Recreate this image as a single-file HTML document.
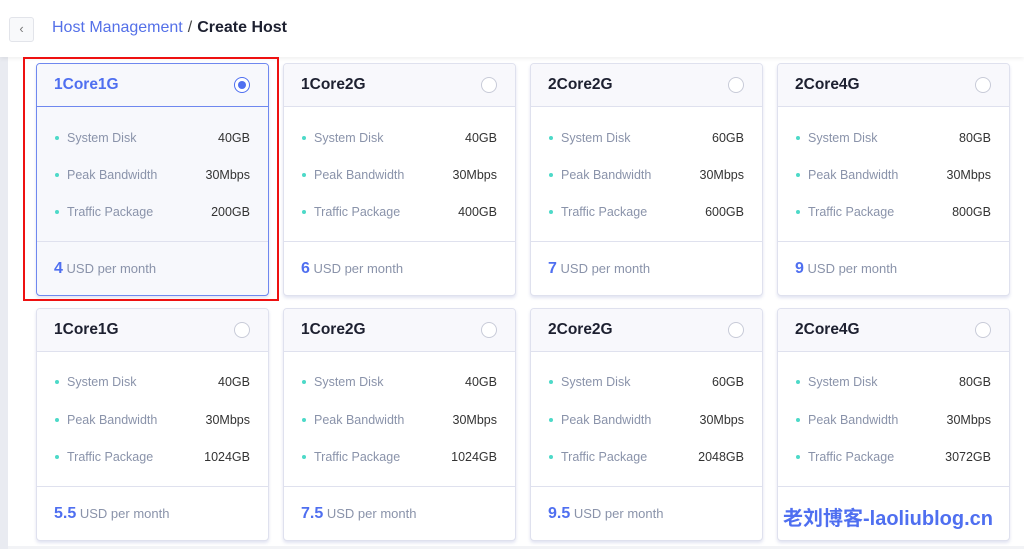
<!DOCTYPE html>
<html><head><meta charset="utf-8"><style>
*{box-sizing:border-box;margin:0;padding:0}
body{width:1024px;height:549px;overflow:hidden;background:#fff;font-family:"Liberation Sans",sans-serif;position:relative}
.top{position:absolute;left:0;top:0;width:1024px;height:57px;background:#fff;box-shadow:0 2px 4px rgba(0,0,0,.06);z-index:2}
.back{position:absolute;left:9px;top:17px;width:25px;height:25px;border:1px solid #e2e4ea;border-radius:3px;background:#f8f9fb;color:#777;font-size:13px;text-align:center;line-height:22px}
.bc{position:absolute;left:52px;top:19px;font-size:16px;color:#5470e8}
.bc b{color:#1d2030}
.bc span{color:#444;margin:0 5px}
.strip{position:absolute;left:0;top:57px;width:8px;height:492px;background:#e9ebf1}
.bot{position:absolute;left:8px;top:546px;width:1016px;height:3px;background:#f2f3f6}
.card{position:absolute;width:233px;height:233px;border:1px solid #dfe1ee;border-radius:4px;background:#fff;box-shadow:0 2px 3px rgba(90,100,180,.18);overflow:hidden}
.hd{height:43px;background:#f8f8fc;border-bottom:1px solid #dfe1ee;position:relative}
.hd .t{position:absolute;left:17px;top:12px;font-size:15.5px;font-weight:bold;color:#1d2030}
.rd{position:absolute;right:18px;top:13px;width:16px;height:16px;border:1px solid #c8cbd8;border-radius:50%;background:#fff}
.row{position:absolute;left:18px;right:18px;font-size:12.5px;color:#8a93aa}
.row:before{content:"";position:absolute;left:0;top:5px;width:4px;height:4px;border-radius:50%;background:#4dd9c8}
.row .l{position:absolute;left:12px}
.row .v{position:absolute;right:0;color:#333}
.ft{position:absolute;left:0;right:0;top:177px;border-top:1px solid #dfe1ee}
.pr{position:absolute;left:17px;top:196px;font-size:13px;color:#8a93aa}
.pr b{font-size:16px;color:#4f6ff0}
.sel{border-color:#6f88ef;background:#f7f8fc}
.sel .hd{background:#f7f8fc;border-bottom-color:#6f88ef}
.sel .hd .t{color:#4f6ff0}
.sel .rd{border-color:#4f6ff0}
.sel .rd:after{content:"";position:absolute;left:3px;top:3px;width:8px;height:8px;border-radius:50%;background:#4f6ff0}
.red{position:absolute;left:23px;top:57px;width:256px;height:244px;border:2px solid #ee1111;z-index:3}
.wm{position:absolute;left:783px;top:502px;font-size:20px;font-weight:bold;color:#4f6ff0;font-family:"Liberation Sans","Noto Sans CJK SC",sans-serif;z-index:4}
</style></head><body>
<div class="top"><div class="back">‹</div><div class="bc">Host Management<span>/</span><b>Create Host</b></div></div>
<div class="strip"></div><div class="bot"></div>

<div class="card sel" style="left:36px;top:63px"><div class="hd"><div class="t">1Core1G</div><div class="rd"></div></div>
<div class="row" style="top:67px"><span class="l">System Disk</span><span class="v">40GB</span></div>
<div class="row" style="top:104px"><span class="l">Peak Bandwidth</span><span class="v">30Mbps</span></div>
<div class="row" style="top:141px"><span class="l">Traffic Package</span><span class="v">200GB</span></div>
<div class="ft"></div><div class="pr"><b>4</b> USD per month</div></div>

<div class="card" style="left:283px;top:63px"><div class="hd"><div class="t">1Core2G</div><div class="rd"></div></div>
<div class="row" style="top:67px"><span class="l">System Disk</span><span class="v">40GB</span></div>
<div class="row" style="top:104px"><span class="l">Peak Bandwidth</span><span class="v">30Mbps</span></div>
<div class="row" style="top:141px"><span class="l">Traffic Package</span><span class="v">400GB</span></div>
<div class="ft"></div><div class="pr"><b>6</b> USD per month</div></div>

<div class="card" style="left:530px;top:63px"><div class="hd"><div class="t">2Core2G</div><div class="rd"></div></div>
<div class="row" style="top:67px"><span class="l">System Disk</span><span class="v">60GB</span></div>
<div class="row" style="top:104px"><span class="l">Peak Bandwidth</span><span class="v">30Mbps</span></div>
<div class="row" style="top:141px"><span class="l">Traffic Package</span><span class="v">600GB</span></div>
<div class="ft"></div><div class="pr"><b>7</b> USD per month</div></div>

<div class="card" style="left:777px;top:63px"><div class="hd"><div class="t">2Core4G</div><div class="rd"></div></div>
<div class="row" style="top:67px"><span class="l">System Disk</span><span class="v">80GB</span></div>
<div class="row" style="top:104px"><span class="l">Peak Bandwidth</span><span class="v">30Mbps</span></div>
<div class="row" style="top:141px"><span class="l">Traffic Package</span><span class="v">800GB</span></div>
<div class="ft"></div><div class="pr"><b>9</b> USD per month</div></div>

<div class="card" style="left:36px;top:308px"><div class="hd"><div class="t">1Core1G</div><div class="rd"></div></div>
<div class="row" style="top:66px"><span class="l">System Disk</span><span class="v">40GB</span></div>
<div class="row" style="top:104px"><span class="l">Peak Bandwidth</span><span class="v">30Mbps</span></div>
<div class="row" style="top:141px"><span class="l">Traffic Package</span><span class="v">1024GB</span></div>
<div class="ft"></div><div class="pr"><b>5.5</b> USD per month</div></div>

<div class="card" style="left:283px;top:308px"><div class="hd"><div class="t">1Core2G</div><div class="rd"></div></div>
<div class="row" style="top:66px"><span class="l">System Disk</span><span class="v">40GB</span></div>
<div class="row" style="top:104px"><span class="l">Peak Bandwidth</span><span class="v">30Mbps</span></div>
<div class="row" style="top:141px"><span class="l">Traffic Package</span><span class="v">1024GB</span></div>
<div class="ft"></div><div class="pr"><b>7.5</b> USD per month</div></div>

<div class="card" style="left:530px;top:308px"><div class="hd"><div class="t">2Core2G</div><div class="rd"></div></div>
<div class="row" style="top:66px"><span class="l">System Disk</span><span class="v">60GB</span></div>
<div class="row" style="top:104px"><span class="l">Peak Bandwidth</span><span class="v">30Mbps</span></div>
<div class="row" style="top:141px"><span class="l">Traffic Package</span><span class="v">2048GB</span></div>
<div class="ft"></div><div class="pr"><b>9.5</b> USD per month</div></div>

<div class="card" style="left:777px;top:308px"><div class="hd"><div class="t">2Core4G</div><div class="rd"></div></div>
<div class="row" style="top:66px"><span class="l">System Disk</span><span class="v">80GB</span></div>
<div class="row" style="top:104px"><span class="l">Peak Bandwidth</span><span class="v">30Mbps</span></div>
<div class="row" style="top:141px"><span class="l">Traffic Package</span><span class="v">3072GB</span></div>
<div class="ft"></div></div>

<div class="red"></div>
<div class="wm">老刘博客-laoliublog.cn</div>
</body></html>
